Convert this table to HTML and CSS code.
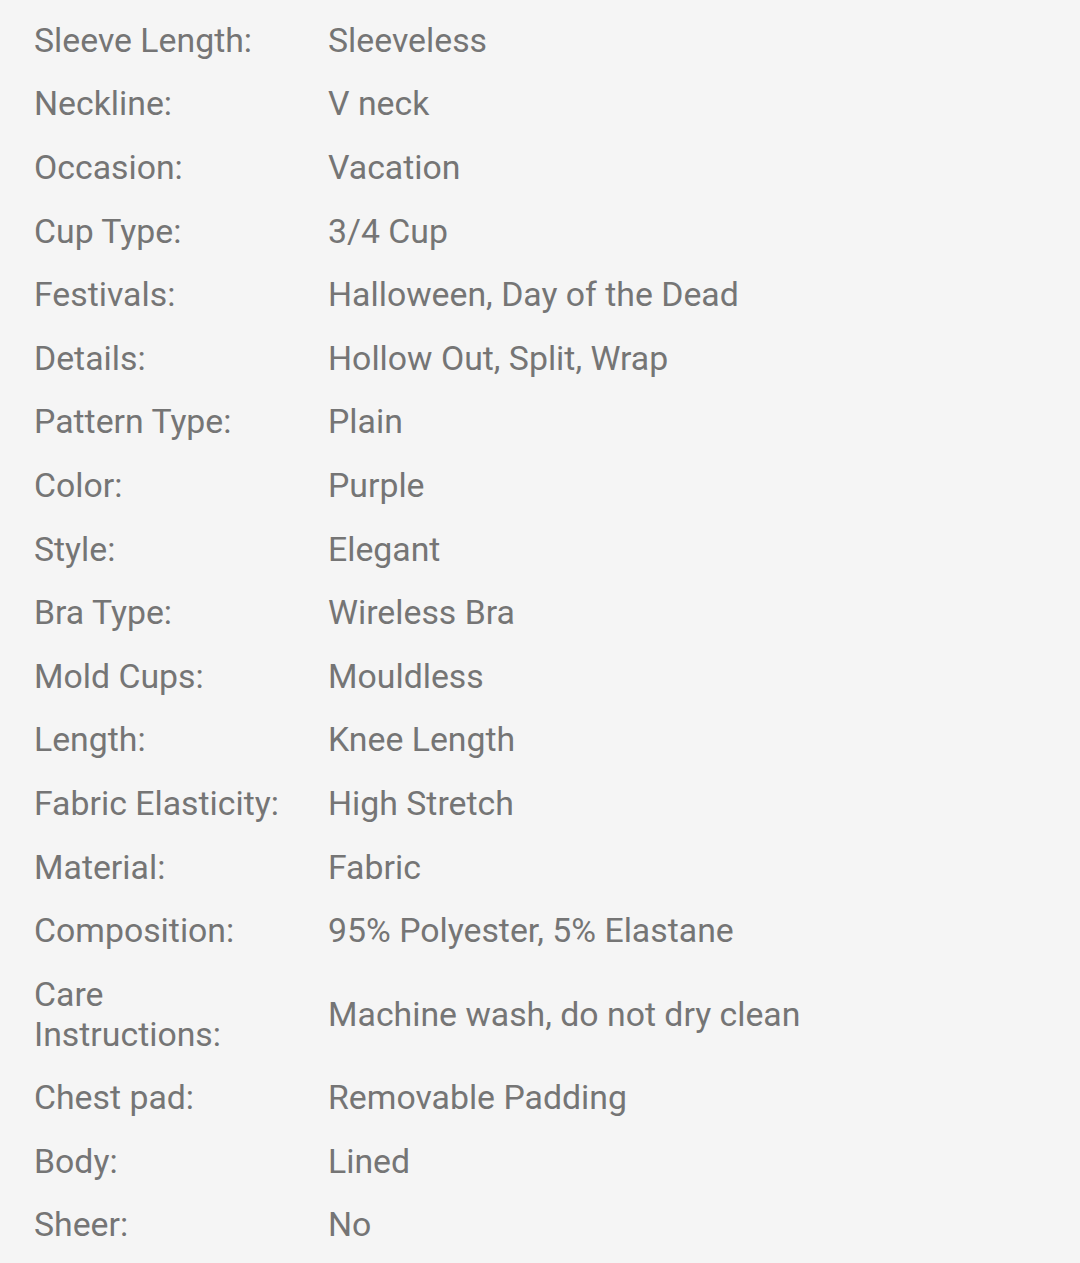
FILE: index.html
```html
<!DOCTYPE html>
<html lang="en">
<head>
<meta charset="utf-8">
<title>Specs</title>
<link rel="stylesheet" href="styles.css">
</head>
<body>
<div class="specs">
  <div class="row"><div class="label">Sleeve Length:</div><div class="value">Sleeveless</div></div>
  <div class="row"><div class="label">Neckline:</div><div class="value">V neck</div></div>
  <div class="row"><div class="label">Occasion:</div><div class="value">Vacation</div></div>
  <div class="row"><div class="label">Cup Type:</div><div class="value">3/4 Cup</div></div>
  <div class="row"><div class="label">Festivals:</div><div class="value">Halloween, Day of the Dead</div></div>
  <div class="row"><div class="label">Details:</div><div class="value">Hollow Out, Split, Wrap</div></div>
  <div class="row"><div class="label">Pattern Type:</div><div class="value">Plain</div></div>
  <div class="row"><div class="label">Color:</div><div class="value">Purple</div></div>
  <div class="row"><div class="label">Style:</div><div class="value">Elegant</div></div>
  <div class="row"><div class="label">Bra Type:</div><div class="value">Wireless Bra</div></div>
  <div class="row"><div class="label">Mold Cups:</div><div class="value">Mouldless</div></div>
  <div class="row"><div class="label">Length:</div><div class="value">Knee Length</div></div>
  <div class="row"><div class="label">Fabric Elasticity:</div><div class="value">High Stretch</div></div>
  <div class="row"><div class="label">Material:</div><div class="value">Fabric</div></div>
  <div class="row"><div class="label">Composition:</div><div class="value">95% Polyester, 5% Elastane</div></div>
  <div class="row"><div class="label">Care Instructions:</div><div class="value">Machine wash, do not dry clean</div></div>
  <div class="row"><div class="label">Chest pad:</div><div class="value">Removable Padding</div></div>
  <div class="row"><div class="label">Body:</div><div class="value">Lined</div></div>
  <div class="row"><div class="label">Sheer:</div><div class="value">No</div></div>
</div>
</body>
</html>
```
FILE: styles.css
```css
html, body {
  margin: 0;
  padding: 0;
  background: #f5f5f5;
}
body {
  font-family: Roboto, "Liberation Sans", sans-serif;
  color: #757575;
  font-size: 33.8px;
}
.specs {
  padding: 9px 0 0 34px;
}
.row {
  display: grid;
  grid-template-columns: 294px 1fr;
  align-items: center;
  padding: 11.8px 0;
  line-height: 40px;
}
.label {
  padding-right: 30px;
}
```
